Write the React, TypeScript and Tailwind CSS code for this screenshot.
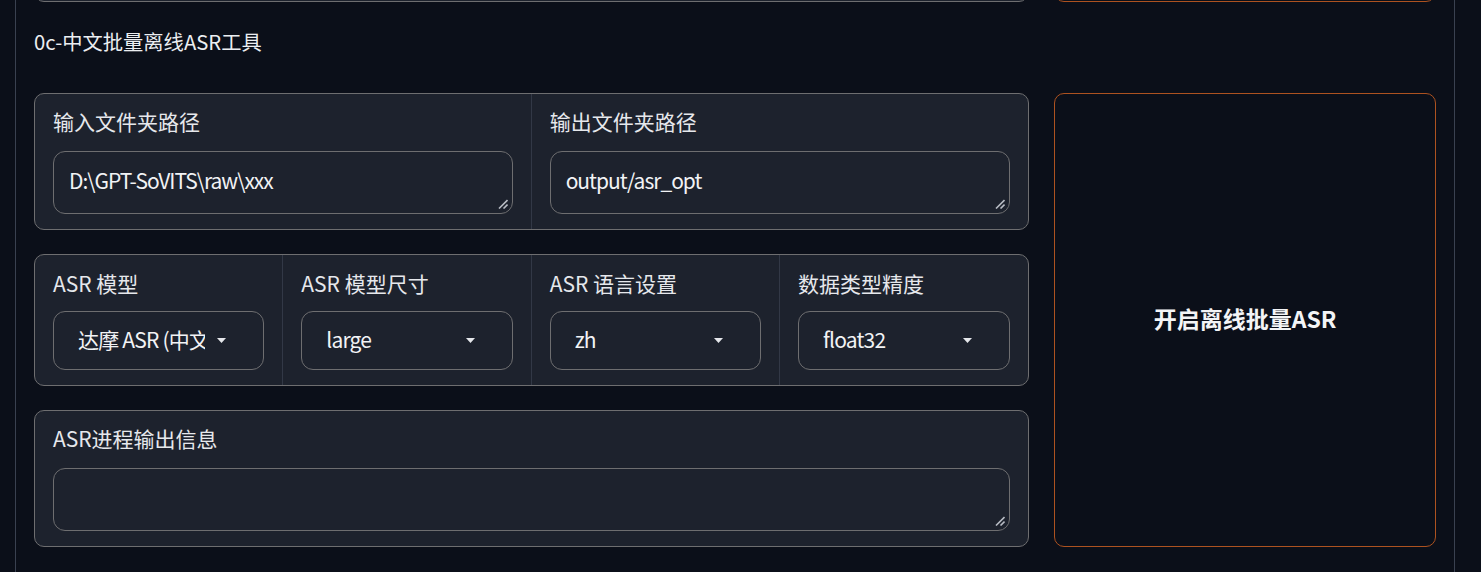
import React from 'react';

const font = { fontFamily: '"Noto Sans CJK SC", "Noto Sans", sans-serif' };

function Grip() {
  return (
    <svg className="absolute right-[4px] bottom-[4px]" width="10" height="10" viewBox="0 0 10 10">
      <line x1="9.5" y1="1" x2="1" y2="9.5" stroke="#b8bcc4" strokeWidth="1.6" />
      <line x1="9.5" y1="5.5" x2="5.5" y2="9.5" stroke="#b8bcc4" strokeWidth="1.6" />
    </svg>
  );
}

function TextCell({ label, value }: { label: string; value?: string }) {
  return (
    <div className="flex flex-col px-[18px] pt-[14px] pb-[15px]">
      <div className="text-[21px] leading-[26px] text-[#e6e8ec]">{label}</div>
      <div className="relative mt-[17px] h-[63px] rounded-[12px] border border-[#6e6e70] bg-[#1d222d] flex items-center px-[15px]">
        <span className="mb-[4px] text-[21px] tracking-[-1px] text-[#f2f3f5]">{value}</span>
        <Grip />
      </div>
    </div>
  );
}

function DropCell({ label, value }: { label: string; value: string }) {
  return (
    <div className="flex flex-col px-[18px] pt-[15px] pb-[15px]">
      <div className="text-[21px] leading-[26px] text-[#e6e8ec] whitespace-nowrap">{label}</div>
      <div className="mt-[15px] h-[59px] rounded-[12px] border border-[#6e6e70] flex items-center pl-[24px] pr-[37px]">
        <span className="mb-[2px] flex-1 min-w-0 overflow-hidden whitespace-nowrap text-[21px] tracking-[-0.8px] text-[#f2f3f5]">{value}</span>
        <svg className="ml-[12px] shrink-0" width="9" height="5" viewBox="0 0 9 5">
          <path d="M0 0 L9 0 L4.5 5 Z" fill="#e5e7eb" />
        </svg>
      </div>
    </div>
  );
}

export default function App() {
  return (
    <div className="w-[1481px] h-[572px] overflow-hidden bg-[#0b0f19]" style={font}>
      <div className="ml-[15px] w-[1440px] h-full border-x border-[#3a4150] px-[18px]">
        {/* bottom of the previous row */}
        <div className="flex gap-[25px] h-[2px]">
          <div className="w-[996px] h-[40px] -mt-[38px] rounded-[10px] border border-[#6e6e70] bg-[#1d222d]" />
          <div className="w-[382px] h-[40px] -mt-[38px] rounded-[10px] border border-[#ad5220]" />
        </div>

        <div className="mt-[24px] text-[20.3px] leading-[30px] text-[#eceef1]">0c-中文批量离线ASR工具</div>

        <div className="mt-[37px] flex gap-[25px]">
          <div className="w-[996px] flex flex-col gap-[24px]">
            <div className="grid grid-cols-2 divide-x divide-[#323846] rounded-[10px] border border-[#6e6e70] bg-[#1d222d]">
              <TextCell label="输入文件夹路径" value="D:\GPT-SoVITS\raw\xxx" />
              <TextCell label="输出文件夹路径" value="output/asr_opt" />
            </div>

            <div className="grid grid-cols-4 divide-x divide-[#323846] rounded-[10px] border border-[#6e6e70] bg-[#1d222d]">
              <DropCell label="ASR 模型" value="达摩 ASR (中文)" />
              <DropCell label="ASR 模型尺寸" value="large" />
              <DropCell label="ASR 语言设置" value="zh" />
              <DropCell label="数据类型精度" value="float32" />
            </div>

            <div className="rounded-[10px] border border-[#6e6e70] bg-[#1d222d]">
              <TextCell label="ASR进程输出信息" />
            </div>
          </div>

          <button className="w-[382px] rounded-[10px] border border-[#ad5220] bg-[#0b0f19] flex items-center justify-center pb-[4px] text-[23px] font-bold text-[#f3f4f6]">
            开启离线批量ASR
          </button>
        </div>
      </div>
    </div>
  );
}
